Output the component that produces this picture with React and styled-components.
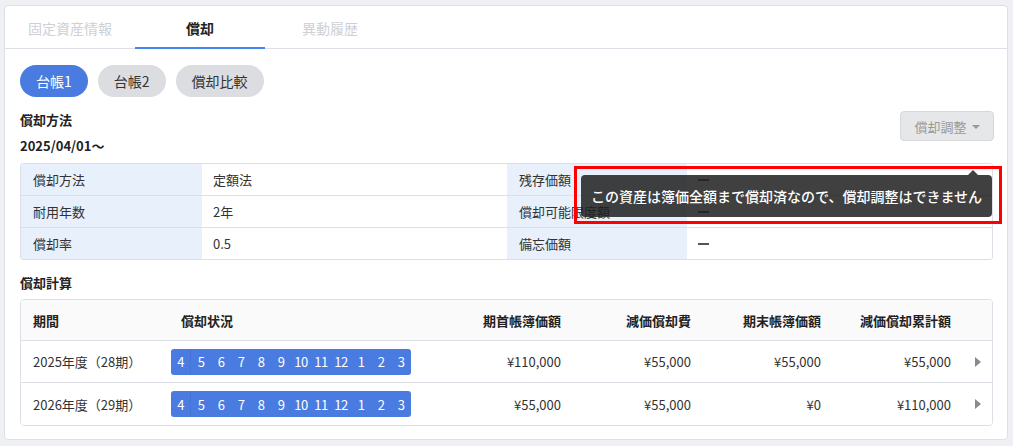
import React from "react";
import styled, { createGlobalStyle } from "styled-components";

const Global = createGlobalStyle`
  html, body { margin: 0; padding: 0; background: #eff0f4; }
  body { font-family: "Noto Sans CJK JP", "Noto Sans", sans-serif; color: #333; font-size: 13px; }
  * { box-sizing: border-box; }
`;

const Page = styled.div`
  padding: 5px 5px 6px 4px;
`;

const Card = styled.div`
  background: #fff;
  border: 1px solid #dcdfe6;
  border-radius: 4px;
`;

const Tabs = styled.div`
  display: flex;
  border-bottom: 1px solid #dcdfe6;
  height: 43px;
`;

const Tab = styled.div`
  width: 130px;
  display: flex;
  align-items: center;
  justify-content: center;
  font-size: 14px;
  font-weight: ${p => (p.$active ? 700 : 400)};
  color: ${p => (p.$active ? "#222" : "#cdd0d5")};
  border-bottom: 2px solid ${p => (p.$active ? "#4285f4" : "transparent")};
  margin-bottom: -1px;
  padding-top: 2px;
`;

const Body = styled.div`
  padding: 16px 14px 13px 15px;
`;

const Pills = styled.div`
  display: flex;
  gap: 10px;
`;

const Pill = styled.div`
  height: 32px;
  padding: 0 16px;
  border-radius: 16px;
  display: flex;
  align-items: center;
  font-size: 14px;
  background: ${p => (p.$active ? "#4a7be0" : "#dcdde1")};
  color: ${p => (p.$active ? "#fff" : "#333")};
`;

const HeadRow = styled.div`
  display: flex;
  justify-content: space-between;
  align-items: flex-start;
  margin-top: 13px;
`;

const Titles = styled.div`
  display: flex;
  flex-direction: column;
  gap: 6px;
`;

const Title = styled.div`
  font-weight: 700;
  font-size: 13px;
  line-height: 20px;
  color: #222;
`;

const ActionWrap = styled.div`
  position: relative;
  margin-top: 1px;
`;

const AdjustButton = styled.div`
  width: 94px;
  height: 30px;
  border: 1px solid #d6d7da;
  background: #e6e7e9;
  border-radius: 4px;
  display: flex;
  align-items: center;
  justify-content: center;
  gap: 5px;
  color: #9a9a9a;
  font-size: 13px;
  margin-right: -1px;
`;

const Caret = styled.span`
  width: 0;
  height: 0;
  border-left: 4px solid transparent;
  border-right: 4px solid transparent;
  border-top: 4px solid #999;
  margin-top: 1px;
`;

const Tooltip = styled.div`
  position: absolute;
  right: 1px;
  top: 64px;
  width: 411px;
  height: 42px;
  background: rgba(30, 30, 30, 0.85);
  color: #fff;
  border-radius: 4px;
  font-size: 14px;
  font-weight: 500;
  display: flex;
  align-items: center;
  justify-content: center;
  white-space: nowrap;
  z-index: 5;
  &::before {
    content: "";
    position: absolute;
    right: 14px;
    top: -5px;
    border-left: 5px solid transparent;
    border-right: 5px solid transparent;
    border-bottom: 5px solid rgba(30, 30, 30, 0.85);
  }
`;

const Highlight = styled.div`
  position: absolute;
  right: -9px;
  top: 55px;
  width: 428px;
  height: 58px;
  border: 3px solid #f00;
  z-index: 6;
  pointer-events: none;
`;

const InfoTable = styled.div`
  margin-top: 7px;
  border: 1px solid #dcdfe6;
  border-radius: 3px;
  display: grid;
  grid-template-columns: 181px 305px 180px 1fr;
  overflow: hidden;
`;

const Cell = styled.div`
  height: ${p => (p.$last ? 31 : 32)}px;
  display: flex;
  align-items: center;
  padding-left: ${p => (p.$label ? 12 : 11)}px;
  background: ${p => (p.$label ? "#e8f0fb" : "#fff")};
  border-bottom: ${p => (p.$last ? "none" : "1px solid #dcdfe6")};
  color: #333;
`;

const Dash = styled.span`
  display: inline-block;
  width: 11px;
  height: 2px;
  background: #555;
`;

const SectionTitle = styled(Title)`
  margin-top: 13px;
`;

const CalcTable = styled.div`
  margin-top: 6px;
  border: 1px solid #dcdfe6;
  border-radius: 4px;
  overflow: hidden;
`;

const CalcRow = styled.div`
  display: grid;
  grid-template-columns: 150px 260px 131px 130px 130px 130px 1fr;
  height: ${p => (p.$head ? 41 : 42)}px;
  align-items: center;
  background: ${p => (p.$head ? "#fafafa" : "#fff")};
  border-bottom: ${p => (p.$last ? "none" : "1px solid #dcdfe6")};
  font-weight: ${p => (p.$head ? 700 : 400)};
  color: ${p => (p.$head ? "#222" : "#333")};
`;

const Period = styled.div`
  padding-left: 12px;
`;

const StatusHead = styled.div`
  padding-left: 10px;
`;

const Amount = styled.div`
  text-align: right;
  padding-right: 1px;
`;

const MonthBar = styled.div`
  display: flex;
  width: 240px;
  height: 26px;
  background: #4a7be0;
  border-radius: 3px;
  overflow: hidden;
`;

const Month = styled.div`
  width: 20px;
  display: flex;
  align-items: center;
  justify-content: center;
  color: #fff;
  font-size: 13px;
  letter-spacing: -0.5px;
  border-right: ${p => (p.$first ? "1px solid #4574d8" : "none")};
`;

const Arrow = styled.span`
  display: block;
  margin-left: 23px;
  width: 0;
  height: 0;
  border-top: 5px solid transparent;
  border-bottom: 5px solid transparent;
  border-left: 6px solid #8a8a8a;
`;

const months = [4, 5, 6, 7, 8, 9, 10, 11, 12, 1, 2, 3];

const infoRows = [
  ["償却方法", "定額法", "残存価額", null],
  ["耐用年数", "2年", "償却可能限度額", null],
  ["償却率", "0.5", "備忘価額", null],
];

const calcRows = [
  ["2025年度（28期）", "¥110,000", "¥55,000", "¥55,000", "¥55,000"],
  ["2026年度（29期）", "¥55,000", "¥55,000", "¥0", "¥110,000"],
];

export default function App() {
  return (
    <Page>
      <Global />
      <Card>
        <Tabs>
          <Tab>固定資産情報</Tab>
          <Tab $active>償却</Tab>
          <Tab>異動履歴</Tab>
        </Tabs>
        <Body>
          <Pills>
            <Pill $active>台帳1</Pill>
            <Pill>台帳2</Pill>
            <Pill>償却比較</Pill>
          </Pills>
          <HeadRow>
            <Titles>
              <Title>償却方法</Title>
              <Title>2025/04/01〜</Title>
            </Titles>
            <ActionWrap>
              <AdjustButton>
                償却調整 <Caret />
              </AdjustButton>
              <Tooltip>この資産は簿価全額まで償却済なので、償却調整はできません</Tooltip>
              <Highlight />
            </ActionWrap>
          </HeadRow>
          <InfoTable>
            {infoRows.map((r, i) => {
              const last = i === infoRows.length - 1;
              return (
                <React.Fragment key={i}>
                  <Cell $label $last={last}>{r[0]}</Cell>
                  <Cell $last={last}>{r[1]}</Cell>
                  <Cell $label $last={last}>{r[2]}</Cell>
                  <Cell $last={last}><Dash /></Cell>
                </React.Fragment>
              );
            })}
          </InfoTable>
          <SectionTitle>償却計算</SectionTitle>
          <CalcTable>
            <CalcRow $head>
              <Period>期間</Period>
              <StatusHead>償却状況</StatusHead>
              <Amount>期首帳簿価額</Amount>
              <Amount>減価償却費</Amount>
              <Amount>期末帳簿価額</Amount>
              <Amount>減価償却累計額</Amount>
              <div />
            </CalcRow>
            {calcRows.map((r, i) => (
              <CalcRow key={i} $last={i === calcRows.length - 1}>
                <Period>{r[0]}</Period>
                <div>
                  <MonthBar>
                    {months.map((m, j) => (
                      <Month key={j} $first={j === 0}>{m}</Month>
                    ))}
                  </MonthBar>
                </div>
                <Amount>{r[1]}</Amount>
                <Amount>{r[2]}</Amount>
                <Amount>{r[3]}</Amount>
                <Amount>{r[4]}</Amount>
                <Arrow />
              </CalcRow>
            ))}
          </CalcTable>
        </Body>
      </Card>
    </Page>
  );
}
